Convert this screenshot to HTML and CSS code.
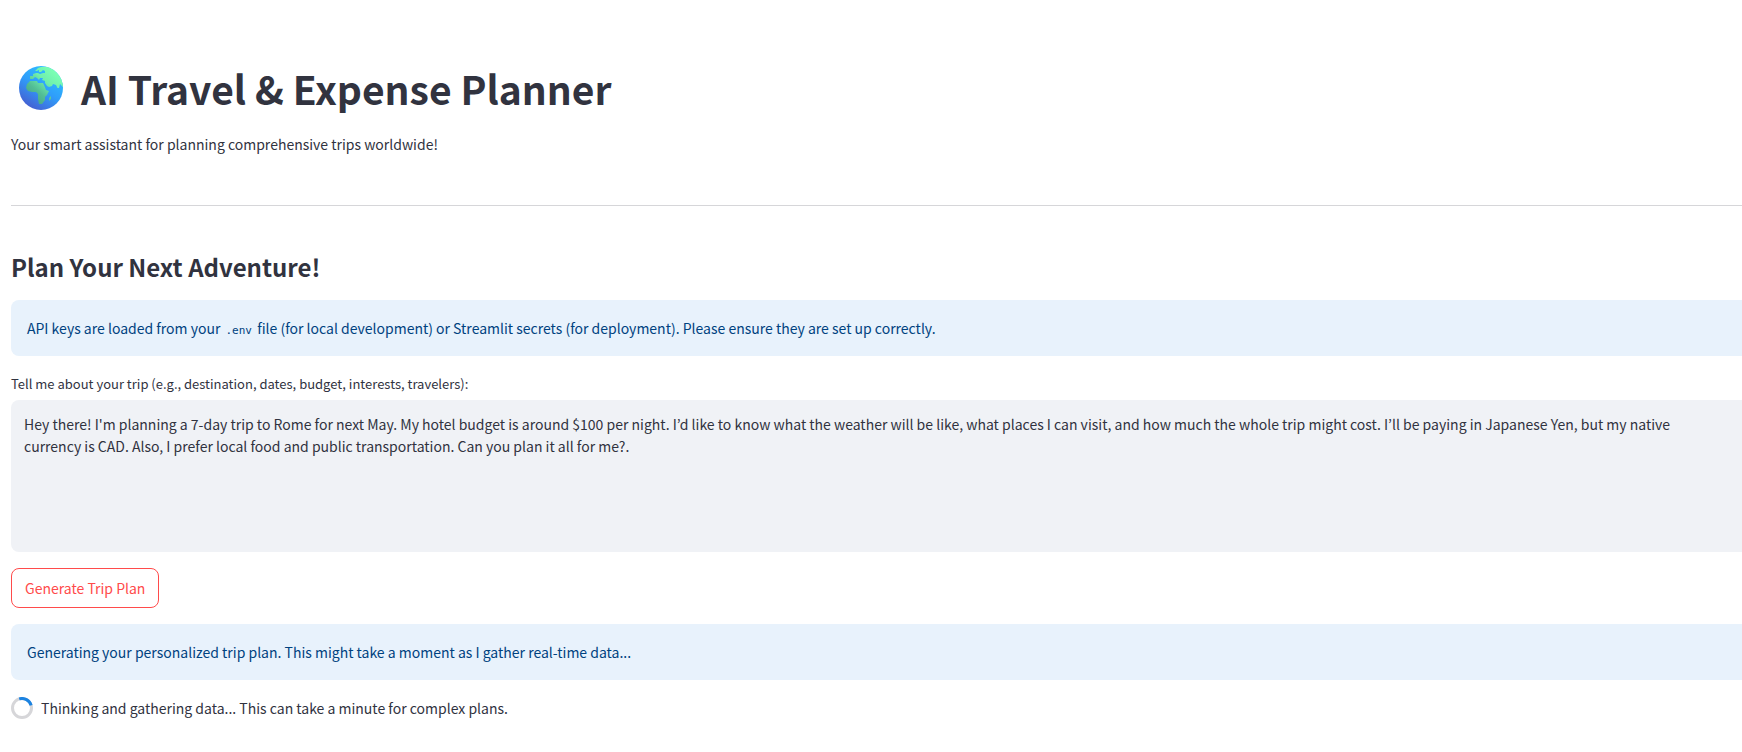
FILE: index.html
```html
<!DOCTYPE html>
<html lang="en">
<head>
<meta charset="utf-8">
<title>AI Travel &amp; Expense Planner</title>
<link rel="stylesheet" href="styles.css">
</head>
<body>
<main class="page">
  <header class="intro">
    <h1 class="title">
      <svg class="globe" viewBox="0 0 44 44" aria-hidden="true">
        <defs>
          <linearGradient id="sea" x1="0.8" y1="0.1" x2="0.25" y2="0.95">
            <stop offset="0" stop-color="#2fc0ff"/>
            <stop offset="0.5" stop-color="#2f9dfa"/>
            <stop offset="1" stop-color="#4560d2"/>
          </linearGradient>
          <linearGradient id="land" gradientUnits="userSpaceOnUse" x1="36" y1="6" x2="12" y2="34">
            <stop offset="0" stop-color="#7bffb4"/>
            <stop offset="0.35" stop-color="#70efac"/>
            <stop offset="0.7" stop-color="#52bd95"/>
            <stop offset="1" stop-color="#46a68a"/>
          </linearGradient>
          <clipPath id="disc"><circle cx="22" cy="22" r="22"/></clipPath>
        </defs>
        <circle cx="22" cy="22" r="22" fill="url(#sea)"/>
        <g clip-path="url(#disc)" fill="url(#land)">
          <path d="M26 1L30 0H44V21L41 18L40 22L38.500 22L37 19L34 18L33 20L30 21L28 20L26 17L26 15L23 14L24 12L21 12L20 14L18 12L16 11L14 13L11 13L11 10L14 10L14 8L17 7L19 7L21 8L24 7L26 7L26 5L24 4L22 6L20 6L20 4L18 5L16 5L19 2L22 1Z"/>
          <path d="M11 15L18 15L19 17L24 17L25.500 20L27 24L30 25L28 29L26 31L26 34L23 38L20 38L19 33L19 28L17 26L13 26L9 25L7 22L8 18Z"/>
          <path d="M30 32L32 30L32 33L30 35Z"/>
        </g>
      </svg>
      <span>AI Travel &amp; Expense Planner</span>
    </h1>
    <p class="text">Your smart assistant for planning comprehensive trips worldwide!</p>
  </header>
  <hr class="divider">
  <h2 class="heading">Plan Your Next Adventure!</h2>
  <form class="stack">
    <div class="alert">API keys are loaded from your <code class="code">.env</code> file (for local development) or Streamlit secrets (for deployment). Please ensure they are set up correctly.</div>
    <div class="field">
      <label class="label" for="trip">Tell me about your trip (e.g., destination, dates, budget, interests, travelers):</label>
      <textarea class="input" id="trip">Hey there! I'm planning a 7-day trip to Rome for next May. My hotel budget is around $100 per night. I’d like to know what the weather will be like, what places I can visit, and how much the whole trip might cost. I’ll be paying in Japanese Yen, but my native currency is CAD. Also, I prefer local food and public transportation. Can you plan it all for me?.</textarea>
    </div>
    <button class="button" type="button">Generate Trip Plan</button>
    <div class="alert">Generating your personalized trip plan. This might take a moment as I gather real-time data...</div>
    <div class="status" role="status">
      <svg class="spinner" viewBox="0 0 22 22" aria-hidden="true">
        <circle cx="11" cy="11" r="9.500" fill="none" stroke="#d6d6d9" stroke-width="3"/>
        <path d="M8.200 1.900A9.500 9.500 0 0 1 20.100 8.400" fill="none" stroke="#1c83e1" stroke-width="3"/>
      </svg>
      <span>Thinking and gathering data... This can take a minute for complex plans.</span>
    </div>
  </form>
</main>
</body>
</html>
```
FILE: styles.css
```css
* { box-sizing: border-box; }

body {
  margin: 0;
  background: #fff;
  color: #31333f;
  font-family: "Noto Sans CJK KR", "Noto Sans CJK JP", "Open Sans", sans-serif;
  font-size: 14px;
  line-height: 24px;
}

.page { padding: 60px 0 32px 11px; }

.title {
  display: flex;
  align-items: center;
  gap: 18px;
  margin: 0;
  padding-left: 8px;
  font-size: 39px;
  font-weight: 700;
  line-height: 56px;
}

.globe { width: 44px; height: 44px; flex: none; }

.text { margin: 16px 0 0; }

.divider {
  height: 1px;
  margin: 49px 0 46px;
  border: 0;
  background: #d6d6d9;
}

.heading {
  margin: 0 0 18px;
  font-size: 24px;
  font-weight: 700;
  line-height: 30px;
}

.stack {
  display: flex;
  flex-direction: column;
  gap: 16px;
}

.alert {
  padding: 16px;
  border-radius: 8px 0 0 8px;
  background: #e8f2fc;
  color: #004280;
}

.code {
  padding: 0 2px;
  font-family: "DejaVu Sans Mono", monospace;
  font-size: 11px;
  line-height: 16px;
}

.field { display: flex; flex-direction: column; gap: 4px; }

.label { font-size: 13px; }

.input {
  display: block;
  width: 100%;
  height: 152px;
  padding: 13px 32px 13px 13px;
  border: 0;
  border-radius: 8px 0 0 8px;
  outline: 0;
  resize: none;
  background: #f0f2f6;
  color: inherit;
  font: inherit;
  line-height: 22px;
}

.button {
  align-self: flex-start;
  height: 40px;
  padding: 0 13px;
  border: 1px solid #ff4b4b;
  border-radius: 8px;
  background: #fff;
  color: #ff4b4b;
  font: inherit;
}

.status { display: flex; align-items: center; gap: 8px; }

.spinner { width: 22px; height: 22px; flex: none; }
```
